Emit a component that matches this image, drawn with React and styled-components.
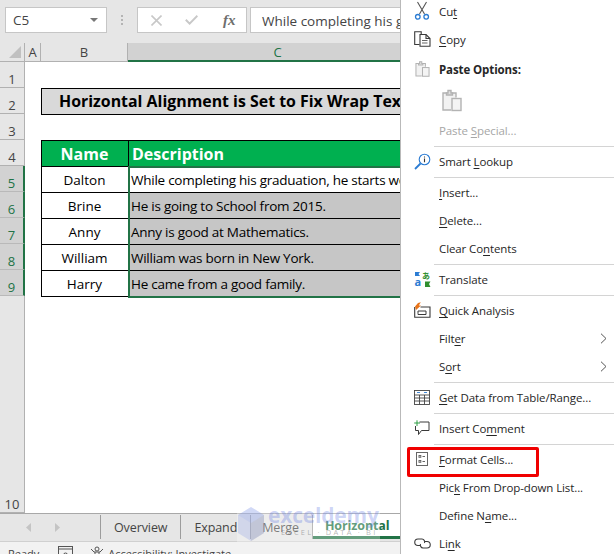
import React from "react";
import styled, { createGlobalStyle } from "styled-components";

const Global = createGlobalStyle`
  html, body { margin: 0; padding: 0; background: #fff; }
  * { box-sizing: border-box; }
`;
const UI = `"Open Sans", "Noto Sans", sans-serif`;

const Page = styled.div`
  position: relative; width: 616px; height: 554px; overflow: hidden;
  display: flex; flex-direction: column; font-family: ${UI}; background: #fff;
`;
const FormulaBar = styled.div`
  height: 43px; flex: none; background: #e6e6e6; display: flex; align-items: flex-start;
  padding: 7px 0 0 5px;
`;
const Field = styled.div`
  height: 26px; background: #fff; border: 1px solid #c6c6c6; display: flex; align-items: center;
  color: #444; font-size: 13.5px; white-space: nowrap; overflow: hidden; padding-top: 1px;
`;
const NameBox = styled(Field)`
  width: 102px; padding: 0 6px 0 7px; justify-content: space-between; flex: none;
`;
const Caret = styled.span`
  width: 0; height: 0; border-left: 4px solid transparent; border-right: 4px solid transparent;
  border-top: 4px solid #777; margin-right: 2px;
`;
const Grip = styled.div`
  width: 30px; height: 26px; flex: none; display: flex; flex-direction: column; align-items: center;
  justify-content: center; gap: 2px;
  span { width: 2px; height: 2px; background: #b4b4b4; }
`;
const FxBox = styled(Field)`
  width: 110px; flex: none; padding: 0 0 0 13px; margin-right: 3px;
`;
const FxSlot = styled.span`
  width: 34px; display: flex; align-items: center; justify-content: flex-start; flex: none;
`;
const FxText = styled.span`
  font-family: "Liberation Serif", serif; font-style: italic; font-size: 15px; font-weight: 700; color: #6e6e6e;
  margin-left: 4px;
`;
const FormulaText = styled(Field)`
  flex: 1; padding-left: 11px;
`;

const Sheet = styled.div`
  flex: none; position: relative; display: grid;
  grid-template-columns: 25px 16px 87px 300px;
  grid-template-rows: 19px repeat(9, 26px) 217px;
  height: 470px; overflow: hidden;
`;
const Corner = styled.div`
  background: #e6e6e6; border-right: 1px solid #b1b1b1; border-bottom: 1px solid #b1b1b1;
  position: relative;
  &::after {
    content: ""; position: absolute; right: 3px; bottom: 3px; width: 0; height: 0;
    border-left: 12px solid transparent; border-bottom: 12px solid #c0c0c0;
  }
`;
const ColHead = styled.div`
  display: flex; align-items: center; justify-content: center; font-size: 13px;
  background: ${p => (p.$active ? "#d2d2d2" : "#e6e6e6")};
  color: ${p => (p.$active ? "#217346" : "#444")};
  border-right: 1px solid #b1b1b1;
  border-bottom: ${p => (p.$active ? "2px solid #217346" : "1px solid #b1b1b1")};
`;
const RowHead = styled.div`
  display: flex; align-items: flex-end; justify-content: center; font-size: 13px;
  line-height: 16px;
  background: ${p => (p.$active ? "#d2d2d2" : "#e6e6e6")};
  color: ${p => (p.$active ? "#217346" : "#444")};
  border-bottom: 1px solid ${p => (p.$active ? "#b9b9b9" : "#b1b1b1")};
  border-right: ${p => (p.$active ? "2px solid #217346" : "1px solid #b1b1b1")};
`;
const Blank = styled.div`background: #fff;`;
const TitleCell = styled.div`
  grid-column: span 2; background: #d9d9d9; font-weight: 700; font-size: 15.9px; color: #000;
  box-shadow: inset 1px 1px 0 #000, 0 1px 0 #000; display: flex; align-items: center;
  padding-left: 18px; white-space: nowrap; overflow: hidden; position: relative; z-index: 1;
`;
const Cell = styled.div`
  display: flex; align-items: center; white-space: nowrap; overflow: hidden; color: #000;
  font-size: 13.5px; box-shadow: inset 1px 1px 0 #000, 0 1px 0 #000; position: relative; z-index: 1;
  padding-top: 2px;
  letter-spacing: ${p => (p.$center ? "0" : "-0.25px")};
  justify-content: ${p => (p.$center ? "center" : "flex-start")};
  padding-left: ${p => (p.$center ? 0 : "3px")};
  background: ${p => (p.$selected ? "#c6c6c6" : "#fff")};
`;
const HeadCell = styled(Cell)`
  background: #00b050; color: #fff; font-weight: 700; font-size: 16px; letter-spacing: 0;
  padding-left: ${p => (p.$center ? 0 : "4px")};
`;
const Selection = styled.div`
  position: absolute; grid-column: 4 / 5; grid-row: 6 / 11; left: 0; right: 0; top: 0; bottom: -2px;
  border: 2px solid #217346; pointer-events: none; z-index: 2;
`;
const TabBar = styled.div`
  height: 28px; flex: none; background: #e6e6e6; border-top: 1px solid #a8a8a8; display: flex;
  align-items: flex-start; font-size: 12.5px; letter-spacing: -0.1px; color: #444;
`;
const TabNav = styled.div`
  width: 101px; height: 24px; border-right: 1px solid #9c9c9c; display: flex; align-items: center;
  padding-left: 26px; gap: 23px; margin-top: 1px;
`;
const TabItem = styled.div`
  height: 24px; margin-top: 1px; padding: 0 13px 0 ${p => p.$lead || 13}px; display: flex; align-items: center;
  border-right: 1px solid #9c9c9c; white-space: nowrap;
`;
const ActiveTab = styled.div`
  flex: 1; height: 25px; background: #fff; color: #217346; font-weight: 700; display: flex; align-items: center;
  padding-left: 12px; border-bottom: 3px solid #217346; white-space: nowrap;
`;
const StatusBar = styled.div`
  flex: 1; background: #f2f2f2; border-top: 1px solid #d0d0d0; display: flex; align-items: flex-start;
  padding: 5px 0 0 8px; font-size: 11px; line-height: 14px; color: #444; white-space: nowrap;
`;
const StatusIcon = styled.span`
  display: flex; margin: -1px ${p => p.$after}px 0 ${p => p.$before}px;
`;

const Watermark = styled.div`
  position: absolute; left: 237px; top: 505px; width: 143px; height: 37px; z-index: 3;
  background: rgba(255, 255, 255, 0.3); pointer-events: none;
`;
const WaterName = styled.span`
  position: absolute; left: 31px; top: -3px; font-size: 21px; line-height: 26px; font-weight: 700;
  color: rgba(85, 110, 225, 0.3); font-family: ${UI}; letter-spacing: -0.2px;
`;
const WaterTag = styled.span`
  position: absolute; left: 44px; top: 22px; font-size: 7.5px; line-height: 10px; letter-spacing: 2.2px;
  color: rgba(90, 90, 90, 0.45); white-space: nowrap;
`;

const Menu = styled.div`
  position: absolute; left: 400px; top: -2px; width: 230px; background: #fff; z-index: 5;
  border-left: 1px solid #b9b9b9; display: flex; flex-direction: column; font-size: 11.5px;
  letter-spacing: -0.1px; color: #222;
`;
const Item = styled.div`
  position: relative; height: 28px; display: flex; align-items: center; white-space: nowrap; flex: none;
  padding-bottom: 2px;
  color: ${p => (p.$disabled ? "#a6a6a6" : "#262626")};
`;
const IconSlot = styled.span`
  width: 38px; height: 100%; flex: none; padding-left: 4px; display: flex; align-items: center; justify-content: center;
`;
const Key = styled.span`text-decoration: underline; text-underline-offset: 2px;`;
const Bold = styled.span`font-weight: 700;`;
const PasteHead = styled(Item)`height: 30px; padding-bottom: 0;`;
const PasteIcons = styled.div`
  height: 33px; flex: none; padding-left: 41px; display: flex; align-items: center;
`;
const Sep = styled.div`
  height: 3px; flex: none; margin: 0 0 0 33px; width: 180px; display: flex; align-items: center;
  &::before { content: ""; display: block; width: 100%; height: 1px; background: #d4d4d4; }
`;
const Chevron = styled.svg`position: absolute; left: 199px; top: 8px;`;
const RedBox = styled.div`
  position: absolute; left: 6px; top: 1px; width: 132px; height: 30px; border: 3px solid #f00000;
  border-radius: 2px; pointer-events: none;
`;

const s = "#3a3a3a";
const Cut = () => (
  <svg width="16" height="20" viewBox="0 0 16 20" fill="none">
    <path d="M3.5 1 L10.5 13 M12.5 1 L5.5 13" stroke="#555" strokeWidth="1.1" />
    <circle cx="3.8" cy="15.8" r="2.3" stroke="#2b7cd3" strokeWidth="1.3" />
    <circle cx="12.2" cy="15.8" r="2.3" stroke="#2b7cd3" strokeWidth="1.3" />
  </svg>
);
const Copy = () => (
  <svg width="17" height="16" viewBox="0 0 17 16" fill="none" stroke={s} strokeWidth="1.1">
    <path d="M5.5 13.5 H.7 V.7 H7.2 V3" />
    <path d="M6 3.5 H12 L16 7.5 V15.3 H6 Z" />
    <path d="M12 3.5 V7.5 H16" />
    <path d="M8 9.5 H13.5 M8 12 H13.5" stroke="#666" />
  </svg>
);
const Paste = ({ w, h }) => (
  <svg width={w} height={h} viewBox="0 0 20 22" fill="none" stroke="#b3b3b3" strokeWidth="1.4">
    <path d="M9 20.5 H1 V3.5 H14 V8" fill="#f2f2f2" />
    <path d="M4.5 3.5 V5.5 H10.5 V3.5 H9 V1 H6 V3.5 Z" fill="#e0e0e0" />
    <rect x="10" y="9" width="9" height="12" fill="#f4f4f4" />
  </svg>
);
const Lookup = () => (
  <svg width="17" height="17" viewBox="0 0 17 17" fill="none">
    <circle cx="10.5" cy="6.5" r="5.3" stroke="#2b7cd3" strokeWidth="1.1" />
    <path d="M6.5 10.5 L1 16" stroke="#2b7cd3" strokeWidth="1.8" />
    <path d="M10.5 3.5 v1 M10.5 5.6 v3.6" stroke="#333" strokeWidth="1.1" />
  </svg>
);
const Translate = () => (
  <svg width="17" height="17" viewBox="0 0 17 17">
    <path d="M1 1 H6 L4.5 3 L6 5 H1 Z" fill="#2b7cd3" />
    <text x="0.5" y="15" fontSize="11" fontWeight="700" fill="#2b7cd3" fontFamily="Open Sans, sans-serif">a</text>
    <text x="8" y="8" fontSize="8" fontWeight="700" fill="#2f8f2f" fontFamily="Noto Sans CJK JP, sans-serif">あ</text>
    <path d="M11 16 V10.5 H16.5 L15 13 L16.5 16 Z" fill="#2f8f2f" />
  </svg>
);
const Quick = () => (
  <svg width="17" height="16" viewBox="0 0 17 16" fill="none">
    <path d="M6.5 5 H16 V15.2 H.7 V5" stroke={s} strokeWidth="1.1" />
    <path d="M4 11.5 V9 H12 V12.5 H4 Z" stroke={s} strokeWidth="1" />
    <path d="M2 8 L1 4.6 L4 1 L6.8 .2 L4.8 3.4 L7 3.6 Z" fill="#e8741a" />
  </svg>
);
const TableIcon = () => (
  <svg width="16" height="15" viewBox="0 0 16 15" fill="none" stroke="#444" strokeWidth=".9">
    <rect x=".5" y=".5" width="15" height="14" />
    <path d="M.5 5 H15.5 M.5 8 H15.5 M.5 11 H15.5 M5.5 5 V14.5 M10.5 5 V14.5" />
    <path d="M3 2.5 H6 M10 2.5 H13" stroke="#2b7cd3" />
  </svg>
);
const Comment = () => (
  <svg width="16" height="16" viewBox="0 0 16 16" fill="none">
    <path d="M5.5 2 H15 V10.5 H7.5 L4.5 14.5 V10.5 H1.5 V6" stroke={s} strokeWidth="1" />
    <path d="M3 .3 V6 M.2 3 H6" stroke="#2f9e44" strokeWidth="1" />
  </svg>
);
const FormatIcon = () => (
  <svg width="12" height="14" viewBox="0 0 12 14" fill="none" stroke="#666" strokeWidth="1">
    <rect x=".5" y=".5" width="11" height="13" />
    <rect x="3" y="3.5" width="1.8" height="1.8" />
    <rect x="3" y="8.5" width="1.8" height="1.8" />
    <path d="M6.5 4.5 H9 M6.5 9.5 H9" />
  </svg>
);
const LinkIcon = () => (
  <svg width="17" height="11" viewBox="0 0 17 11" fill="none" stroke={s} strokeWidth="1.1">
    <path d="M6 7.5 H4 A3 3 0 0 1 4 1 H8 A3 3 0 0 1 10.5 5" />
    <path d="M11 3.5 H13 A3 3 0 0 1 13 10 H9 A3 3 0 0 1 6.5 6" />
  </svg>
);
const NavArrow = ({ d }) => (
  <svg width="6" height="9" viewBox="0 0 6 9">
    <path d={d} fill="#c4c4c4" />
  </svg>
);
const X = () => (
  <svg width="11" height="11" viewBox="0 0 11 11" stroke="#c8c8c8" strokeWidth="1.6" fill="none">
    <path d="M.5 .5 L10.5 10.5 M10.5 .5 L.5 10.5" />
  </svg>
);
const Check = () => (
  <svg width="13" height="10" viewBox="0 0 13 10" stroke="#c8c8c8" strokeWidth="2" fill="none">
    <path d="M.8 4.8 L4.6 8.6 L12.4 .8" />
  </svg>
);
const Hexagon = () => (
  <svg width="28" height="36" viewBox="0 0 28 36" style={{ position: "absolute", left: 0, top: 1 }}>
    <path d="M14 1 L27 9 V27 L14 35 L1 27 V9 Z" fill="rgba(100,125,225,.2)" />
    <path d="M14 1 L27 9 L14 17 L1 9 Z" fill="rgba(150,170,235,.2)" />
    <path d="M14 17 L27 9 V27 L14 35 Z" fill="rgba(120,120,120,.16)" />
  </svg>
);
const Monitor = () => (
  <svg width="15" height="12" viewBox="0 0 15 12" fill="none" stroke="#555" strokeWidth="1">
    <rect x=".5" y=".5" width="14" height="14" />
    <path d="M.5 3 H14.5" />
    <circle cx="7.5" cy="9" r="2" />
  </svg>
);
const Person = () => (
  <svg width="14" height="12" viewBox="0 0 14 12" fill="none" stroke="#555" strokeWidth="1">
    <circle cx="7" cy="3" r="2" />
    <path d="M1 3 L4 6 H10 L13 3 M5 6 V12 M9 6 V12" />
  </svg>
);
const More = () => (
  <Chevron width="7" height="11" viewBox="0 0 7 11" fill="none" stroke="#555" strokeWidth="1">
    <path d="M1 .7 L6 5.5 L1 10.3" />
  </Chevron>
);

const Label = ({ t }) => (
  <span>
    {t[0]}
    {t[1] && <Key>{t[1]}</Key>}
    {t[2]}
  </span>
);
const MenuItem = ({ t, icon, disabled, more, children }) => (
  <Item $disabled={disabled}>
    <IconSlot>{icon}</IconSlot>
    <Label t={t} />
    {more && <More />}
    {children}
  </Item>
);

const rows = [
  ["Dalton", "While completing his graduation, he starts working"],
  ["Brine", "He is going to School from 2015."],
  ["Anny", "Anny is good at Mathematics."],
  ["William", "William was born in New York."],
  ["Harry", "He came from a good family."],
];

export default function App() {
  return (
    <Page>
      <Global />
      <FormulaBar>
        <NameBox>C5<Caret /></NameBox>
        <Grip><span /><span /><span /></Grip>
        <FxBox>
          <FxSlot><X /></FxSlot>
          <FxSlot><Check /></FxSlot>
          <FxText>fx</FxText>
        </FxBox>
        <FormulaText>While completing his graduation, he starts working</FormulaText>
      </FormulaBar>

      <Sheet>
        <Corner />
        <ColHead>A</ColHead>
        <ColHead>B</ColHead>
        <ColHead $active>C</ColHead>

        <RowHead>1</RowHead><Blank /><Blank /><Blank />
        <RowHead>2</RowHead><Blank />
        <TitleCell>Horizontal Alignment is Set to Fix Wrap Text</TitleCell>
        <RowHead>3</RowHead><Blank /><Blank /><Blank />
        <RowHead>4</RowHead><Blank />
        <HeadCell $center>Name</HeadCell>
        <HeadCell>Description</HeadCell>
        {rows.map(([name, text], i) => (
          <React.Fragment key={name}>
            <RowHead $active>{i + 5}</RowHead>
            <Blank />
            <Cell $center>{name}</Cell>
            <Cell $selected={i > 0}>{text}</Cell>
          </React.Fragment>
        ))}
        <RowHead>10</RowHead><Blank /><Blank /><Blank />
        <Selection />
      </Sheet>

      <TabBar>
        <TabNav>
          <NavArrow d="M5 0 V9 L0 4.5 Z" />
          <NavArrow d="M0 0 V9 L5 4.5 Z" />
        </TabNav>
        <TabItem>Overview</TabItem>
        <TabItem>Expand</TabItem>
        <TabItem $lead={11}>Merge</TabItem>
        <ActiveTab>Horizontal</ActiveTab>
      </TabBar>
      <StatusBar>
        Ready
        <StatusIcon $before={19} $after={17}><Monitor /></StatusIcon>
        <StatusIcon $before={0} $after={4}><Person /></StatusIcon>
        Accessibility: Investigate
      </StatusBar>

      <Watermark>
        <Hexagon />
        <WaterName>exceldemy</WaterName>
        <WaterTag>EXCEL · DATA · BI</WaterTag>
      </Watermark>

      <Menu>
        <MenuItem t={["Cu", "t"]} icon={<Cut />} />
        <MenuItem t={["", "C", "opy"]} icon={<Copy />} />
        <PasteHead>
          <IconSlot><Paste w={15} h={16} /></IconSlot>
          <Bold>Paste Options:</Bold>
        </PasteHead>
        <PasteIcons><Paste w={20} h={23} /></PasteIcons>
        <MenuItem t={["Paste ", "S", "pecial..."]} disabled />
        <Sep />
        <MenuItem t={["Smart ", "L", "ookup"]} icon={<Lookup />} />
        <Sep />
        <MenuItem t={["", "I", "nsert..."]} />
        <MenuItem t={["", "D", "elete..."]} />
        <MenuItem t={["Clear Co", "n", "tents"]} />
        <Sep />
        <MenuItem t={["Translate"]} icon={<Translate />} />
        <Sep />
        <MenuItem t={["", "Q", "uick Analysis"]} icon={<Quick />} />
        <MenuItem t={["Filt", "e", "r"]} more />
        <MenuItem t={["S", "o", "rt"]} more />
        <Sep />
        <MenuItem t={["", "G", "et Data from Table/Range..."]} icon={<TableIcon />} />
        <Sep />
        <MenuItem t={["Insert Co", "m", "ment"]} icon={<Comment />} />
        <Sep />
        <MenuItem t={["", "F", "ormat Cells..."]} icon={<FormatIcon />}>
          <RedBox />
        </MenuItem>
        <MenuItem t={["Pic", "k", " From Drop-down List..."]} />
        <MenuItem t={["Define N", "a", "me..."]} />
        <MenuItem t={["Li", "n", "k"]} icon={<LinkIcon />} />
      </Menu>
    </Page>
  );
}
